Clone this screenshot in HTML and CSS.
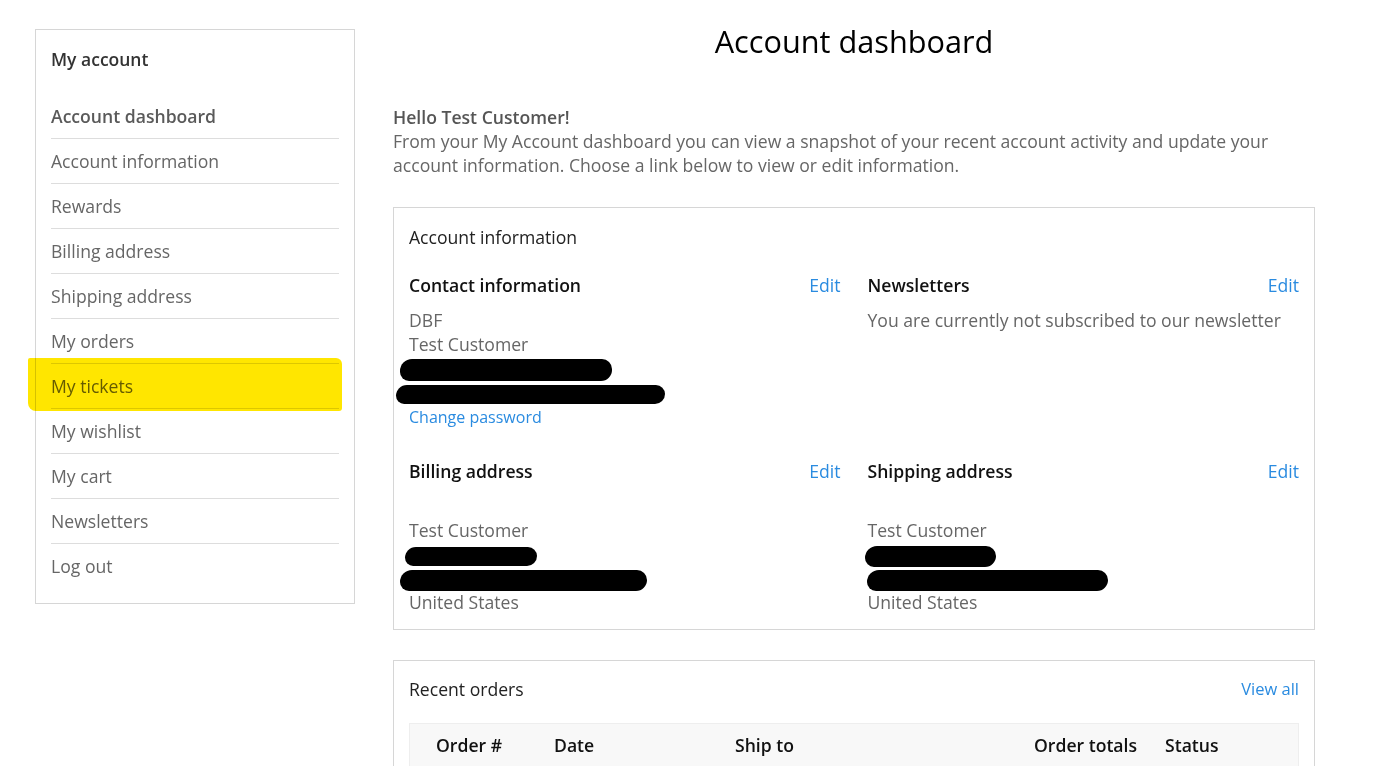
FILE: index.html
```html
<!DOCTYPE html>
<html>
<head>
  <title>Account dashboard</title>
  <link rel="stylesheet" href="styles.css">
</head>
<body>
  <div class="page">
    <div class="sidebar">
      <div class="sidebar-title">My account</div>
      <ul class="nav">
        <li class="active">Account dashboard</li>
        <li>Account information</li>
        <li>Rewards</li>
        <li>Billing address</li>
        <li>Shipping address</li>
        <li>My orders</li>
        <li class="marked">My tickets<span class="highlight"></span></li>
        <li>My wishlist</li>
        <li>My cart</li>
        <li>Newsletters</li>
        <li>Log out</li>
      </ul>
    </div>

    <div class="main">
      <h1>Account dashboard</h1>

      <div class="welcome">
        <p class="hello">Hello Test Customer!</p>
        <p>From your My Account dashboard you can view a snapshot of your recent account activity and update your account information. Choose a link below to view or edit information.</p>
      </div>

      <div class="box">
        <div class="box-title">Account information</div>
        <div class="cols">
          <div class="col">
            <div class="col-head"><span>Contact information</span><a href="#">Edit</a></div>
            <div class="lines">
              <div>DBF</div>
              <div>Test Customer</div>
              <div class="line"><span class="redact" style="width:212px;margin-left:-9px;height:22px"></span></div>
              <div class="line"><span class="redact" style="width:269px;margin-left:-13px;height:19px"></span></div>
              <a class="small-link" href="#">Change password</a>
            </div>
          </div>
          <div class="col">
            <div class="col-head"><span>Newsletters</span><a href="#">Edit</a></div>
            <div class="lines">
              <div>You are currently not subscribed to our newsletter</div>
            </div>
          </div>
          <div class="col">
            <div class="col-head"><span>Billing address</span><a href="#">Edit</a></div>
            <div class="lines address">
              <div>Test Customer</div>
              <div class="line"><span class="redact" style="width:132px;margin-left:-4px;height:19px"></span></div>
              <div class="line"><span class="redact" style="width:247px;margin-left:-9px;height:21px"></span></div>
              <div>United States</div>
            </div>
          </div>
          <div class="col">
            <div class="col-head"><span>Shipping address</span><a href="#">Edit</a></div>
            <div class="lines address">
              <div>Test Customer</div>
              <div class="line"><span class="redact" style="width:131px;margin-left:-3px;height:21px"></span></div>
              <div class="line"><span class="redact" style="width:241px;margin-left:-1px;height:21px"></span></div>
              <div>United States</div>
            </div>
          </div>
        </div>
      </div>

      <div class="box orders">
        <div class="orders-head"><span class="box-title">Recent orders</span><a href="#">View all</a></div>
        <table class="orders-table">
          <thead>
            <tr>
              <th class="c-num">Order #</th>
              <th class="c-date">Date</th>
              <th class="c-ship">Ship to</th>
              <th class="c-total">Order totals</th>
              <th class="c-status">Status</th>
            </tr>
          </thead>
        </table>
      </div>
    </div>
  </div>
</body>
</html>
```

FILE: styles.css
```css
body {
  margin: 0;
  font-family: "Open Sans", Arial, sans-serif;
  color: #666;
  background: #fff;
}
a {
  color: #2a8be0;
  text-decoration: none;
}
.page {
  display: flex;
  align-items: flex-start;
  gap: 38px;
  padding: 29px 0 0 35px;
}

/* sidebar */
.sidebar {
  width: 288px;
  border: 1px solid #d6d6d6;
  padding: 15px 15px 15px 15px;
}
.sidebar-title {
  font-size: 17.5px;
  font-weight: 600;
  color: #333;
  line-height: 28px;
  margin-bottom: 21px;
}
.nav {
  list-style: none;
  margin: 0;
  padding: 0;
}
.nav li {
  font-size: 17.6px;
  line-height: 44px;
  border-bottom: 1px solid #ddd;
  position: relative;
}
.nav li:last-child {
  border-bottom: none;
}
.nav li.active {
  font-weight: 600;
  color: #5a5a5a;
}
.nav .highlight {
  position: absolute;
  left: -23px;
  right: -3px;
  top: -6px;
  bottom: -3px;
  background: #ffe600;
  mix-blend-mode: multiply;
  border-radius: 2px 6px 3px 8px;
}

/* main */
.main {
  width: 922px;
}
h1 {
  margin: 0;
  text-align: center;
  font-size: 30.7px;
  font-weight: 500;
  color: #000;
  line-height: 24px;
}
.welcome {
  margin-top: 52px;
  font-size: 17.6px;
  line-height: 24px;
}
.welcome p {
  margin: 0;
}
.welcome .hello {
  font-weight: 600;
  color: #555;
}
.box {
  border: 1px solid #d6d6d6;
  padding: 15px 15px 15px 15px;
  margin-top: 30px;
}
.box-title {
  font-size: 17.6px;
  color: #222;
  line-height: 28px;
}
.cols {
  display: grid;
  grid-template-columns: 1fr 1fr;
  column-gap: 27px;
  row-gap: 27px;
  margin-top: 20px;
}
.col-head {
  display: flex;
  justify-content: space-between;
  font-size: 17.6px;
  line-height: 28px;
}
.col-head span {
  font-weight: 600;
  color: #111;
}
.lines {
  margin-top: 9px;
  font-size: 17.6px;
  line-height: 24px;
}
.lines.address {
  margin-top: 33px;
}
.line {
  height: 24px;
  position: relative;
}
.redact {
  display: inline-block;
  background: #000;
  border-radius: 12px 10px 11px 9px;
  vertical-align: middle;
}
.small-link {
  display: block;
  font-size: 16px;
  line-height: 26px;
}
.orders {
  padding-top: 14px;
  padding-bottom: 0;
}
.orders-head {
  display: flex;
  justify-content: space-between;
  align-items: center;
}
.orders-head a {
  font-size: 16.5px;
  margin-top: -2px;
}
.orders-table {
  width: 100%;
  border-collapse: collapse;
  margin-top: 20px;
  background: #f8f8f8;
  border: 1px solid #eee;
}
.orders-table th {
  text-align: left;
  font-size: 17.6px;
  font-weight: 600;
  color: #111;
  height: 42px;
  padding: 0;
}
.c-num { padding-left: 26px !important; width: 118px; }
.c-date { width: 181px; }
.c-ship { width: 299px; }
.c-total { width: 131px; }
```
